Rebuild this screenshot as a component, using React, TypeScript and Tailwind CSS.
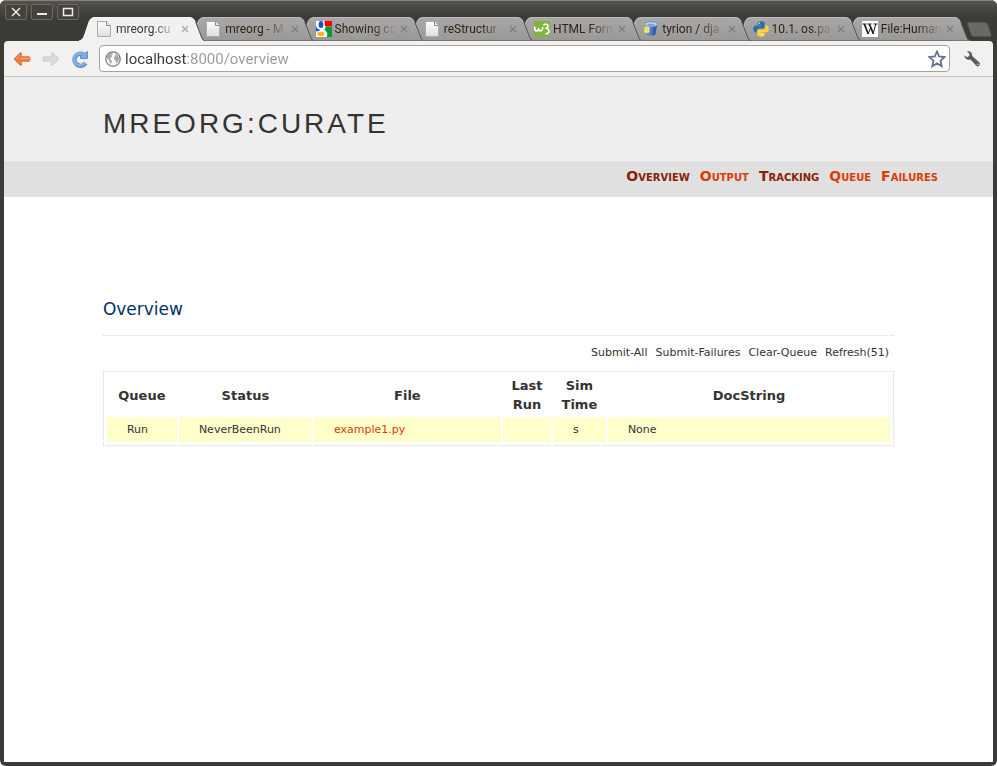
import React from "react";

type Tab = { title: string; icon: React.ReactNode };

const PageIcon = () => (
  <svg viewBox="0 0 16 16" className="size-4" aria-hidden="true">
    <defs>
      <linearGradient id="paper" x1="0" y1="0" x2="0" y2="1">
        <stop offset="0" stopColor="#fdfdfd" />
        <stop offset="1" stopColor="#dedede" />
      </linearGradient>
    </defs>
    <path d="M.5 .5h9l4 4v11H.5z" fill="url(#paper)" stroke="#aaa" />
    <path d="M9.500 .5v4h4" fill="#eee" stroke="#888" />
  </svg>
);

const GoogleIcon = () => (
  <svg viewBox="0 0 16 16" className="size-4" aria-hidden="true">
    <rect width="16" height="16" fill="#fff" />
    <path d="M8.500 0H16v5.500H9z" fill="#f00" />
    <path d="M10 5.500h6V16h-5.500c2-3 0-5.500-2-7z" fill="#079a3c" />
    <path d="M0 4.500c.5 3 2.500 4 4.500 4.300L3 10 0 10.500z" fill="#1057c8" />
    <ellipse cx="5" cy="3.500" rx="2.400" ry="3.500" fill="#1057c8" />
    <ellipse cx="5" cy="13" rx="3.600" ry="2.200" fill="#fdb813" />
  </svg>
);

const W3Icon = () => (
  <svg viewBox="0 0 16 16" className="size-4" aria-hidden="true">
    <rect width="16" height="16" fill="#82b440" />
    <path
      d="M.8 5.500c-.3 3.500.5 4.500 1.800 4.500s2-1 2-3c0 2 .7 3 2 3s2.200-1.500 2-4"
      fill="none"
      stroke="#fff"
      strokeWidth="1.600"
    />
    <path
      d="M9.500 4.500C10.500 2.500 14 2.800 14 5c0 1.600-1.500 2.200-2.700 2.200 2.200 0 3.700.8 3.700 2.800s-2 3.300-3.500 2.300"
      fill="none"
      stroke="#fff"
      strokeWidth="1.600"
    />
  </svg>
);

const BucketIcon = () => (
  <svg viewBox="0 0 16 16" className="size-4" aria-hidden="true">
    <path d="M2 3l1.500 10c1 2.300 8 2.300 9 0L14 3z" fill="#4a7fd0" />
    <path d="M10 5l-.5 9.500c2-.2 2.800-.8 3-1.500L14 3z" fill="#2f5fae" />
    <ellipse cx="8" cy="3.300" rx="6.200" ry="2.600" fill="#c9dcf3" stroke="#5f8fd2" />
    <ellipse cx="8" cy="3.700" rx="4" ry="1.300" fill="#7ba5df" />
    <rect x="1" y="5.500" width="5.500" height="6.500" rx="1.500" fill="#f4ec8c" stroke="#c9b93a" strokeWidth=".7" />
    <circle cx="3.800" cy="8.700" r="1.200" fill="#fff" stroke="#b9a92e" strokeWidth=".6" />
  </svg>
);

const PythonIcon = () => (
  <svg viewBox="0 0 16 16" className="size-4" aria-hidden="true">
    <path
      d="M7.900.3C5.200.3 4.600 1.300 4.600 2.400V4h3.600v.6H2.700C1.200 4.600.3 5.800.3 8s.9 3.500 2.200 3.500h1.400V9.700c0-1.300 1.100-2.300 2.400-2.300h3.500c1.100 0 1.900-.9 1.900-2V2.400C11.700 1.100 10.500.3 7.900.3z"
      fill="#2f6ea5"
    />
    <path
      d="M8.200 15.700c2.700 0 3.300-1 3.300-2.100V12H7.900v-.6h5.500c1.500 0 2.400-1.200 2.400-3.400s-.9-3.500-2.200-3.500h-1.400v1.800c0 1.300-1.100 2.300-2.400 2.300H6.300c-1.100 0-1.900.9-1.900 2v3c0 1.300 1.200 2.100 3.800 2.100z"
      fill="#ffd43b"
    />
    <circle cx="6.200" cy="2.300" r=".7" fill="#fff" />
    <circle cx="9.900" cy="13.700" r=".7" fill="#fff" />
  </svg>
);

const WikipediaIcon = () => (
  <svg viewBox="0 0 16 16" className="size-4" aria-hidden="true">
    <rect width="16" height="16" fill="#fff" />
    <path d="M2.300 3l4 10M7.300 3l4.200 10" fill="none" stroke="#222" strokeWidth="1.800" />
    <path d="M.5 3h4M5.500 3h4M11.500 3h4M13.800 3l-2.800 10M9 6l-3 7" fill="none" stroke="#222" />
  </svg>
);

const tabs: Tab[] = [
  { title: "mreorg.cu", icon: <PageIcon /> },
  { title: "mreorg - M", icon: <PageIcon /> },
  { title: "Showing co", icon: <GoogleIcon /> },
  { title: "reStructur", icon: <PageIcon /> },
  { title: "HTML Form", icon: <W3Icon /> },
  { title: "tyrion / dja", icon: <BucketIcon /> },
  { title: "10.1. os.pa", icon: <PythonIcon /> },
  { title: "File:Human", icon: <WikipediaIcon /> },
];

function BrowserTab({ tab, active, level }: { tab: Tab; active: boolean; level: number }) {
  return (
    <div className="relative flex h-6 min-w-0 flex-1 items-center pr-[3px] pl-[10px]" style={{ zIndex: level }}>
      <svg
        viewBox="0 0 127 24"
        preserveAspectRatio="none"
        className="absolute inset-y-0 -left-2 -z-10 h-6 w-[calc(100%+18px)]"
        aria-hidden="true"
      >
        <defs>
          <linearGradient id="idle" x1="0" y1="0" x2="0" y2="1">
            <stop offset="0" stopColor="#a9a8a6" />
            <stop offset="1" stopColor="#999896" />
          </linearGradient>
        </defs>
        <path
          d="M0 24C4 23 4.500 21 6 17L10 5C11.500 1.500 13 .5 16 .5H110C113 .5 114.500 1.500 116 5L121 18C122.500 22 123 23.500 127 24z"
          fill={active ? "#f2f1f0" : "url(#idle)"}
        />
        <path
          d="M0 24C4 23 4.500 21 6 17L10 5C11.500 1.500 13 .5 16 .5H110C113 .5 114.500 1.500 116 5L121 18C122.500 22 123 23.500 127 24"
          fill="none"
          stroke={active ? "#f7f6f5" : "#bcbbb9"}
          strokeWidth="1"
        />
        <path d="M116.500 5L121.500 18C123 22 123.500 23.500 127 24" fill="none" stroke="#555450" strokeWidth="1" />
        {!active && <path d="M4 23.500H125" stroke="#777674" />}
      </svg>
      <button type="button" role="tab" aria-selected={active} className="flex min-w-0 flex-1 items-center gap-[3px] text-left">
        <span className="shrink-0">{tab.icon}</span>
        <span
          className={`min-w-0 flex-1 overflow-hidden font-[Roboto,sans-serif] text-xs leading-4 whitespace-nowrap [mask-image:linear-gradient(to_right,#000_60%,transparent)] ${
            active ? "text-[#3c3b37]" : "text-[#2c2618]"
          }`}
        >
          {tab.title}
        </span>
      </button>
      <button type="button" aria-label={`Close ${tab.title}`} className="grid size-4 shrink-0 place-items-center">
        <svg viewBox="0 0 8 8" className="size-2" aria-hidden="true">
          <path d="M1 1l6 6M7 1l-6 6" stroke={active ? "#aaa" : "#807f7d"} strokeWidth="1.300" />
        </svg>
      </button>
    </div>
  );
}

function WindowButton({ label, children }: { label: string; children: React.ReactNode }) {
  return (
    <button
      type="button"
      aria-label={label}
      className="grid h-4 w-[22px] place-items-center rounded-xs border border-[#6b6963] bg-[#43423d]"
    >
      <svg viewBox="0 0 12 10" className="h-[10px] w-3" fill="none" stroke="#efebe2" aria-hidden="true">
        {children}
      </svg>
    </button>
  );
}

function TitleBar() {
  return (
    <div className="flex h-[41px] items-end rounded-t-md border-t border-[#84827c] bg-linear-to-b from-[#55534d] to-[#3c3b37] to-40% pr-[5px]">
      <div className="flex w-[87px] shrink-0 gap-1 self-start pt-[3px] pl-[5px]">
        <WindowButton label="Close window">
          <path d="M2 1l8 8M10 1l-8 8" strokeWidth="1.500" />
        </WindowButton>
        <WindowButton label="Minimize window">
          <path d="M1 7h10" strokeWidth="2" />
        </WindowButton>
        <WindowButton label="Maximize window">
          <path d="M1.500 1.500h9v7h-9z" strokeWidth="1.500" />
        </WindowButton>
      </div>
      <div role="tablist" className="isolate flex min-w-0 flex-1">
        {tabs.map((tab, i) => (
          <BrowserTab key={tab.title} tab={tab} active={i === 0} level={tabs.length - i} />
        ))}
      </div>
      <button type="button" aria-label="New tab" className="mb-1 ml-[6px] shrink-0">
        <svg viewBox="0 0 25 15" className="h-[15px] w-[25px]" aria-hidden="true">
          <path
            d="M2 .5H17C19 .5 20 1 21 3L24 12C24.500 14 24 14.500 22.500 14.500H7C5.500 14.500 5 14 4 12L.8 3C.3 1.500.500.500 2 .5z"
            fill="#6b6963"
            stroke="#55534e"
          />
        </svg>
      </button>
    </div>
  );
}

function Toolbar() {
  return (
    <div className="flex h-9 items-center rounded-t-sm border-b border-[#c4c3c1] bg-[#f2f1f0] pr-3 pl-2">
      <button type="button" aria-label="Back" className="grid w-5 place-items-center">
        <svg viewBox="0 0 20 18" className="h-4 w-5" aria-hidden="true">
          <path d="M1 9L8 2Q10 1.500 9.500 4L8.500 6.500H18Q19 6.500 19 9T18 11.500H8.500L9.500 14Q10 16.500 8 16z" fill="#ee7f3b" stroke="#d8692f" />
          <path d="M3 9L8 4M8 8.500H18" stroke="#f9b184" fill="none" />
        </svg>
      </button>
      <button type="button" aria-label="Forward" className="ml-[9px] grid w-5 place-items-center">
        <svg viewBox="0 0 20 18" className="h-4 w-5 -scale-x-100" aria-hidden="true">
          <path d="M1 9L8 2Q10 1.500 9.500 4L8.500 6.500H18Q19 6.500 19 9T18 11.500H8.500L9.500 14Q10 16.500 8 16z" fill="#dcdad8" stroke="#cfcdcb" />
        </svg>
      </button>
      <button type="button" aria-label="Reload" className="ml-[9px] grid w-5 place-items-center">
        <svg viewBox="0 0 18 18" className="size-[18px]" fill="none" aria-hidden="true">
          <path d="M14.500 13A6 6 0 1 1 12.500 4.500" stroke="#5b93cd" strokeWidth="4.500" />
          <path d="M16.500 1.500v7H9.500V6z" fill="#7eb0e2" stroke="#5b93cd" />
          <path d="M14 12.500A6 6 0 1 1 13 4.800" stroke="#84b5e6" strokeWidth="2.500" />
        </svg>
      </button>
      <form className="ml-[9px] flex h-[27px] min-w-0 flex-1 items-center rounded-sm border border-[#a5a39e] bg-white pr-[3px] pl-[5px]">
        <svg viewBox="0 0 16 16" className="size-4 shrink-0" aria-hidden="true">
          <circle cx="8" cy="8" r="7.200" fill="#fafafa" stroke="#777" strokeWidth="1.200" />
          <path d="M2 5.500C3 3 5 2 7 2L8 3 6.500 4.500 7 6 5 7 5.500 8.500 7 10 6 13 4.500 11.500 4 9 2.500 8z" fill="#a8a8a8" />
          <path d="M9.500 2.500l3 1.500 1.700 3.500-.7 2.500-2 2.500-1-3L9 8l.5-2.500 1-.5z" fill="#a8a8a8" />
        </svg>
        <input
          type="text"
          aria-label="Address"
          defaultValue="localhost:8000/overview"
          className="ml-1 min-w-0 flex-1 bg-[linear-gradient(to_right,#3a3935_62px,#9a9996_62px)] bg-clip-text font-[Roboto,sans-serif] text-[15px] leading-5 text-transparent caret-black outline-none"
        />
        <button type="button" aria-label="Bookmark this page">
          <svg viewBox="0 0 18 18" className="size-[18px]" aria-hidden="true">
            <path
              d="M9 1.500l2.200 5 5.300.6-4 3.600 1.200 5.500L9 13.400l-4.700 2.800 1.200-5.500-4-3.600 5.300-.6z"
              fill="#fff"
              stroke="#66718c"
              strokeWidth="1.800"
            />
          </svg>
        </button>
      </form>
      <button type="button" aria-label="Settings" className="ml-[13px]">
        <svg viewBox="0 0 18 18" className="size-[18px]" aria-hidden="true">
          <path
            d="M4 1.500C7 .8 9.500 3 9.200 6L16.500 12.500Q17.500 14 16.300 15.500T13.500 16L7.500 9.500C4.500 10.500 1.500 8.500 1.300 5.500L4 7.200 6.500 5.800 6.300 3.500z"
            fill="#5c5b58"
          />
          <circle cx="14.800" cy="14.300" r=".8" fill="#ddd" />
        </svg>
      </button>
    </div>
  );
}

const sections = [
  { label: "Overview", visited: true },
  { label: "Output", visited: false },
  { label: "Tracking", visited: true },
  { label: "Queue", visited: false },
  { label: "Failures", visited: false },
];

const columns = [
  { label: "Queue", width: "w-[70px]" },
  { label: "Status", width: "w-[133px]" },
  { label: "File", width: "w-[187px]" },
  { label: "Last Run", width: "w-12" },
  { label: "Sim Time", width: "w-[53px]" },
  { label: "DocString", width: "w-auto" },
];

const actions = ["Submit-All", "Submit-Failures", "Clear-Queue", "Refresh(51)"];

export default function App() {
  return (
    <div className="flex min-h-screen flex-col rounded-md bg-[#3c3b37] font-['Noto_Sans',sans-serif]">
      <TitleBar />
      <div className="mx-1 mb-1 flex flex-1 flex-col bg-white font-['DejaVu_Sans',sans-serif] text-[11px] text-[#333]">
        <div className="bg-[#3c3b37]">
          <Toolbar />
        </div>
        <header>
          <div className="bg-[#eee] px-[10%] pt-[27px] pb-[17px]">
            <h1 className="font-['Liberation_Sans',Arial,sans-serif] text-[28px] leading-10 tracking-[3px] uppercase">
              mreorg:curate
            </h1>
          </div>
          <nav className="flex h-9 justify-end gap-[10px] bg-[#e0e0e0] pt-[5px] pr-[55px] text-sm leading-5 font-bold [font-variant:small-caps]">
            {sections.map((s) => (
              <a key={s.label} href="#" className={s.visited ? "text-[#882200]" : "text-[#dd3c00]"}>
                {s.label}
              </a>
            ))}
          </nav>
        </header>
        <main className="px-[10%] pt-[99px]">
          <h2 className="border-b border-dotted border-[#d4d4d4] pb-[13px] text-[17px] leading-[26px] text-[#003366]">
            Overview
          </h2>
          <div className="flex justify-end gap-2 pt-[9px] pr-[5px] pb-[10px] leading-4">
            {actions.map((a) => (
              <a key={a} href="#">
                {a}
              </a>
            ))}
          </div>
          <table className="w-full table-fixed border-separate border-spacing-[2px] border border-dotted border-[#d4d4d4] p-px">
            <thead>
              <tr>
                {columns.map((c) => (
                  <th key={c.label} scope="col" className={`${c.width} py-px text-[13px] leading-[19px] font-bold`}>
                    {c.label}
                  </th>
                ))}
              </tr>
            </thead>
            <tbody>
              <tr className="h-[25px] leading-4 *:bg-[#ffffcc] *:pl-5">
                <td>Run</td>
                <td>NeverBeenRun</td>
                <td>
                  <a href="#" className="text-[#dd3c00]">
                    example1.py
                  </a>
                </td>
                <td></td>
                <td>s</td>
                <td>None</td>
              </tr>
            </tbody>
          </table>
        </main>
      </div>
    </div>
  );
}
